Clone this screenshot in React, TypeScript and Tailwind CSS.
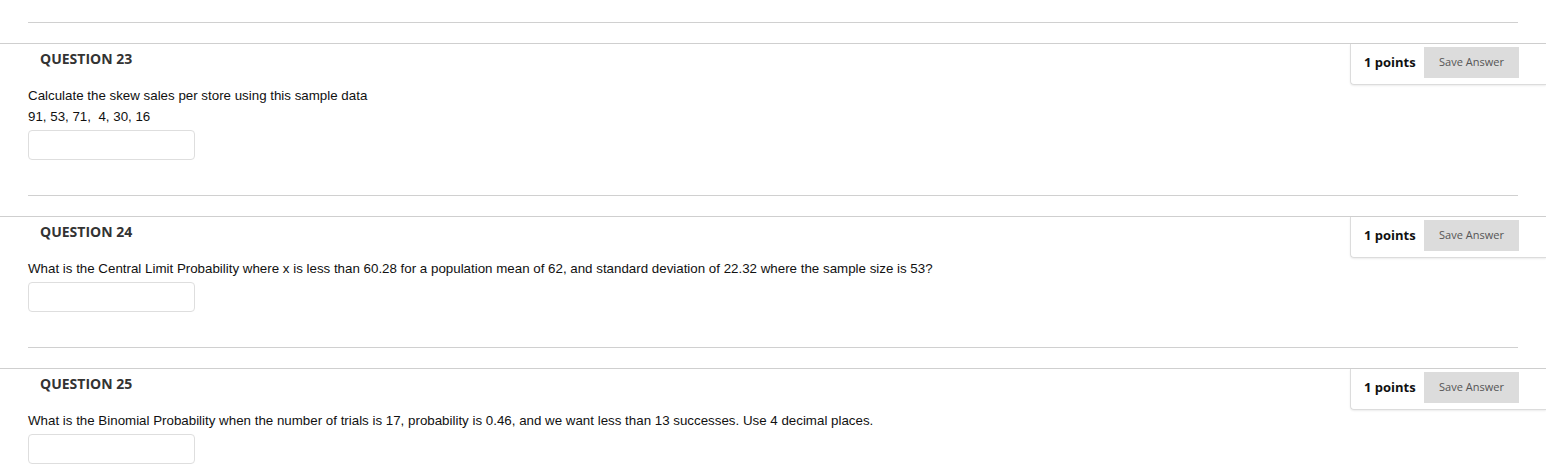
import React from "react";

type Q = { num: number; lines: string[] };

const questions: Q[] = [
  {
    num: 23,
    lines: [
      "Calculate the skew sales per store using this sample data",
      "91, 53, 71,\u00a0 4, 30, 16",
    ],
  },
  {
    num: 24,
    lines: [
      "What is the Central Limit Probability where x is less than 60.28 for a population mean of 62, and standard deviation of 22.32 where the sample size is 53?",
    ],
  },
  {
    num: 25,
    lines: [
      "What is the Binomial Probability when the number of trials is 17, probability is 0.46, and we want less than 13 successes. Use 4 decimal places.",
    ],
  },
];

function Question({ q }: { q: Q }) {
  return (
    <div className="pb-[35px]">
      <div className="mx-[28px] border-t border-[#d0d0d0]" />
      <div className="mt-[20px] border-t border-[#cfcfcf]">
        <div className="relative h-[41px]">
          <div
            className="pl-[40px] pt-[6px] text-[14px] leading-[18px] font-bold text-[#333]"
            style={{ fontFamily: '"Open Sans", sans-serif' }}
          >
            QUESTION {q.num}
          </div>
          <div className="absolute right-0 top-0 flex h-[41px] w-[196px] items-start rounded-bl-[4px] border-b border-l border-[#dcdcdc] pl-[13px] pr-[27px] pt-[3px] shadow-[0_1px_2px_rgba(0,0,0,0.08)]">
            <span
              className="mt-[6px] text-[13px] leading-[18px] font-bold text-[#111]"
              style={{ fontFamily: '"Open Sans", sans-serif' }}
            >
              1 points
            </span>
            <button
              className="ml-auto h-[31px] w-[95px] bg-[#dcdcdc] text-[11px] text-[#555]"
              style={{ fontFamily: '"Open Sans", sans-serif' }}
            >
              Save Answer
            </button>
          </div>
        </div>
        <div
          className="px-[28px] text-[13.33px] leading-[21px] text-[#111]"
          style={{ fontFamily: '"Liberation Sans", Arial, sans-serif' }}
        >
          {q.lines.map((l, i) => (
            <div key={i}>{l}</div>
          ))}
          <input
            type="text"
            className="mt-[3px] block h-[30px] w-[167px] rounded-[4px] border border-[#dedede] bg-white"
          />
        </div>
      </div>
    </div>
  );
}

export default function App() {
  return (
    <div className="min-h-screen w-full bg-white pt-[22px]">
      {questions.map((q) => (
        <Question key={q.num} q={q} />
      ))}
    </div>
  );
}
